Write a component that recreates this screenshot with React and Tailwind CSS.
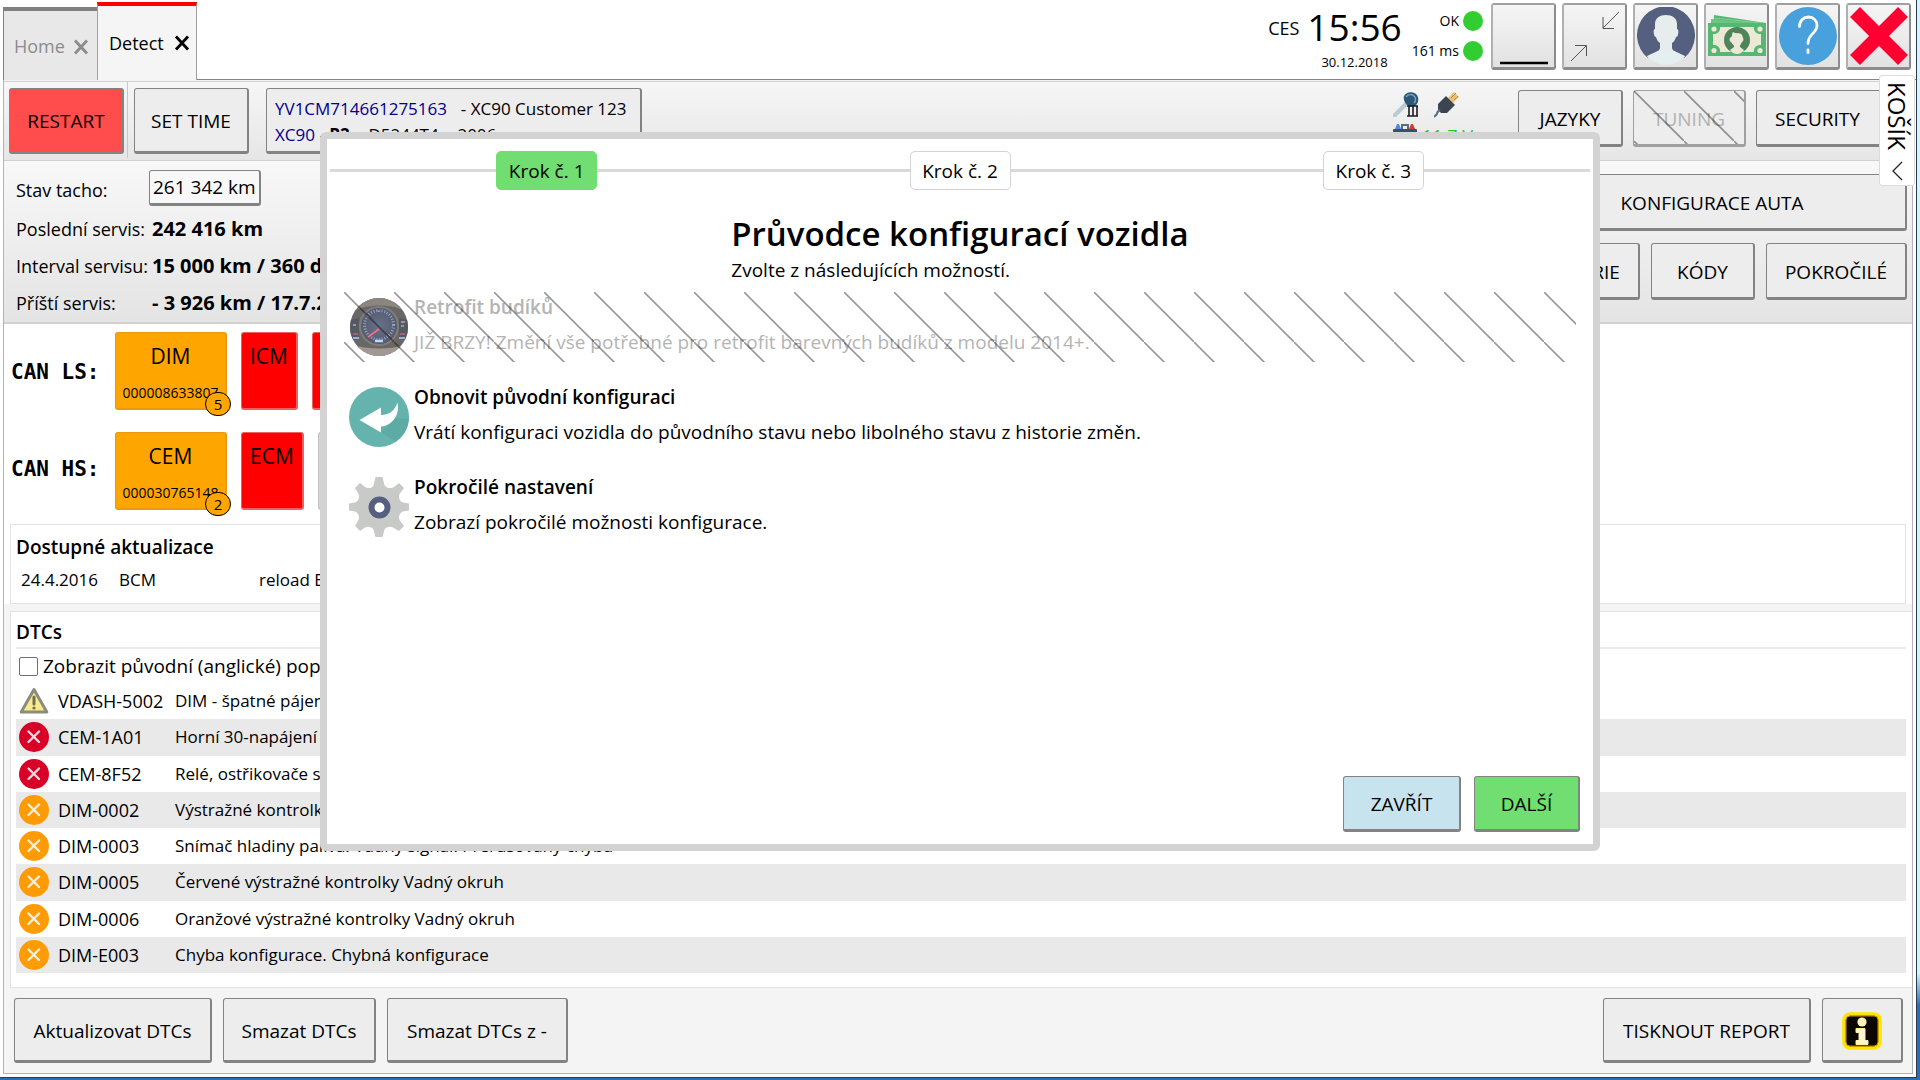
import { useId } from 'react';

const BTN =
  'flex items-center justify-center rounded-[3px] border border-r-2 border-b-[3px] border-[#838383] pt-[2px] text-[19px] leading-6';

function Hatch() {
  const id = useId();
  return (
    <svg className="pointer-events-none absolute inset-0 h-full w-full" aria-hidden="true">
      <defs>
        <pattern id={id} width="50" height="50" patternUnits="userSpaceOnUse">
          <path d="M-1-1L51 51" stroke="#000" strokeOpacity=".4" strokeWidth="1.6" />
        </pattern>
      </defs>
      <rect width="100%" height="100%" fill={`url(#${id})`} />
    </svg>
  );
}

function Cross({ className }) {
  return (
    <svg className={className} viewBox="0 0 16 16" aria-hidden="true">
      <path d="M2 1.5L14 14.5M14 1.5L2 14.5" stroke="currentColor" strokeWidth="2.8" fill="none" />
    </svg>
  );
}

function PersonIcon() {
  return (
    <svg className="h-[58px] w-[58px]" viewBox="0 0 58 58" aria-hidden="true">
      <path d="M11 51A29 29 0 1 1 47 51L36 45H22Z" fill="#556080" />
      <path d="M18 17c0-6 5-9 11-9s11 3 11 9v5c1 0 2 2 1 5 0 2-1 3-2 3-1 3-2 5-4 6v5c0 1 1 2 2 3l11 5c-5 6-12 9-19 9s-14-3-19-9l11-5c1-1 2-2 2-3v-5c-2-1-3-3-4-6-1 0-2-1-2-3-1-3 0-5 1-5Z" fill="#E7ECED" />
      <path d="M10 49.500L21 44h16l11 5.500A29 29 0 0 1 10 49.500Z" fill="#E4EFF2" />
    </svg>
  );
}

function CashIcon() {
  return (
    <svg className="h-[58px] w-[58px]" viewBox="0 0 58 58" aria-hidden="true">
      <path d="M6 8L58 16V24H5Z" fill="#57B671" />
      <path d="M3 12L58 17V28H3Z" fill="#6cc585" />
      <path d="M6 11L58 16.500" stroke="#9bdcae" strokeWidth=".7" />
      <rect x="0" y="16" width="58" height="33" fill="#57B671" />
      <path d="M12 20H46a6 6 0 0 0 7 7V38a6 6 0 0 0-7 7H12a6 6 0 0 0-7-7V27a6 6 0 0 0 7-7Z" fill="#EBE9D5" />
      <circle cx="6" cy="22" r="2.600" fill="#EBE9D5" />
      <circle cx="52" cy="22" r="2.600" fill="#EBE9D5" />
      <circle cx="6" cy="43.500" r="2.600" fill="#EBE9D5" />
      <circle cx="52" cy="43.500" r="2.600" fill="#EBE9D5" />
      <circle cx="29" cy="33" r="13" fill="#4F8359" />
      <path d="M24 29c0-1 0-3 1-4 2 2 7 0 9 3l1 3c1 1 0 4-1 4-1 2-2 3-2 4v1l4 3c-2 3-5 4-7 4s-5-1-7-4l4-3v-1c0-1-2-2-3-4-1 0-2-3-1-4Z" fill="#EBE9D5" />
    </svg>
  );
}

function HelpIcon() {
  return (
    <svg className="h-[58px] w-[58px]" viewBox="0 0 58 58" aria-hidden="true">
      <circle cx="29" cy="29" r="29" fill="#48A0DC" />
      <path d="M20.500 19.500c0-6 4-9.500 9-9.500 5 0 8.500 3.500 8.500 8.500 0 8-9 8-9 18" fill="none" stroke="#fff" strokeWidth="2.800" strokeLinecap="round" />
      <path d="M29 43v2.500" stroke="#fff" strokeWidth="2.800" strokeLinecap="round" />
    </svg>
  );
}

function ShrinkIcon() {
  return (
    <svg className="h-[58px] w-[58px]" viewBox="0 0 58 58" fill="none" stroke="#555" strokeWidth="1" aria-hidden="true">
      <path d="M53 5L37 21M37 10V21.500H48M5 54L20 39M9 38.500H20.500V49" />
    </svg>
  );
}

function KeyIcon() {
  return (
    <svg className="h-[26px] w-[26px]" viewBox="0 0 26 26" aria-hidden="true">
      <path d="M12 10L0 22v3h3L15 13Z" fill="#b9ccd4" />
      <path d="M11 4c2-4 8-5 12-2 3 3 3 8 0 11-2 2-6 2-9 0-2-2-4-5-3-9Z" fill="#2b5876" />
      <path d="M13 5c2-3 6-3 8-1 2 2 2 5 0 7" fill="none" stroke="#7fa6bd" strokeWidth="1.500" />
      <path d="M14 14h11M14 24h11M16 14v10M20 14v10M24 14v10" stroke="#1b1b24" strokeWidth="1.600" />
    </svg>
  );
}

function PlugIcon() {
  return (
    <svg className="h-[26px] w-[26px]" viewBox="0 0 26 26" aria-hidden="true">
      <path d="M14 6L20 0l5 5-6 6Z" fill="#ecc077" />
      <path d="M17 6l5-5M20 8l4-4" stroke="#b98a45" strokeWidth="1" />
      <path d="M12 4l9 9-8 8H7l-3-3v-6Z" fill="#3b4650" />
      <path d="M6 18c-2 1-3 2-3 4l-3 3" fill="none" stroke="#5b7083" strokeWidth="2" />
    </svg>
  );
}

function BatteryIcon() {
  return (
    <svg className="h-[24px] w-[24px]" viewBox="0 0 24 24" aria-hidden="true">
      <path d="M2 5l2-5h2l2 5Z" fill="#4d8fdc" />
      <path d="M16 5l2-5h2l2 5Z" fill="#c9432f" />
      <path d="M9 5V1h6v4" fill="none" stroke="#5c6b7a" strokeWidth="2" />
      <rect x="0" y="5" width="24" height="17" rx="1" fill="#3c4f66" />
    </svg>
  );
}

function GaugeIcon() {
  return (
    <svg className="m-[1px] h-[58px] w-[58px] opacity-70" viewBox="0 0 58 58" aria-hidden="true">
      <defs>
        <clipPath id="gaugeClip"><circle cx="29" cy="29" r="29" /></clipPath>
        <radialGradient id="gaugeFace"><stop offset="0" stopColor="#26365c" /><stop offset="1" stopColor="#11172b" /></radialGradient>
      </defs>
      <g clipPath="url(#gaugeClip)">
        <rect width="58" height="58" fill="#2b2826" />
        <path d="M0 0H58V15C45 5 14 5 0 15Z" fill="#5b554b" />
        <path d="M0 46C18 52 40 52 58 46V58H0Z" fill="#7a6d66" />
        <path d="M0 22l9-2v20l-9 4ZM58 22l-9-2v20l9 4Z" fill="#10131f" />
        <circle cx="29" cy="28" r="20" fill="#4a4744" />
        <circle cx="29" cy="28" r="18" fill="url(#gaugeFace)" />
        <circle cx="29" cy="27" r="14.500" fill="none" stroke="#6e8fd6" strokeWidth="3" strokeDasharray="1 2.300" pathLength="110" />
        <path d="M29 31L18 39" stroke="#f0305a" strokeWidth="1.800" />
        <path d="M25 43h8" stroke="#a9c4ff" strokeWidth="2.500" />
        <path d="M3 40h6M49 40h6" stroke="#6e8fd6" strokeWidth="2" />
        <path d="M3 36h5M50 36h5" stroke="#a12a49" strokeWidth="1.500" />
        <path d="M51 24h4M51 28h3M3 27h3" stroke="#b8c8ee" strokeWidth="1.200" />
      </g>
    </svg>
  );
}

function RestoreIcon() {
  return (
    <svg className="h-[60px] w-[60px]" viewBox="0 0 60 60" aria-hidden="true">
      <circle cx="30" cy="30" r="30" fill="#64B3AD" />
      <path d="M32 45L47 31l13 1A30 30 0 0 1 47 54.500Z" fill="#5CA8A2" opacity=".8" />
      <path d="M10.500 33L32 20.500v7.500c9 0 14-5 16.500-12.500C51 27 44 38.500 32 39.500V45.500Z" fill="#fff" />
    </svg>
  );
}

function GearIcon() {
  return (
    <svg className="h-[60px] w-[60px]" viewBox="0 0 60 60" aria-hidden="true">
      <path d="M26.500 0h7l2 8.500c3 3.500 7.500 3 10 1L50 6l5 5-4.500 6c-1.500 4 .5 8 3.500 8.500l6 1v7l-6 1c-3 1-5 4.500-3.500 8.500L55 49l-5 5-6-3.500c-3-1.500-7-.5-8.500 2L33.500 60h-7l-2-7.500c-1.500-2.500-5.500-3.500-8.500-2L11 54l-5-5 3.500-6c1.500-4-.5-7.500-3.500-8.500l-6-1v-7l6-1c3-.5 5-4.500 3.500-8.500L6 11l5-5 4.500 3.500c3 2 7 2.500 9-1Z" fill="#C7CAC7" />
      <circle cx="30.500" cy="30.500" r="8" fill="#fff" stroke="#556080" strokeWidth="6" />
    </svg>
  );
}

function DtcIcon({ kind }) {
  if (kind === 'warn') {
    return (
      <svg className="h-[30px] w-[30px]" viewBox="0 0 30 30" aria-hidden="true">
        <path d="M15 3.500L27.800 26H2.200Z" fill="#F8EB8A" stroke="#8b8b80" strokeWidth="3" strokeLinejoin="round" />
        <path d="M15 11v7" stroke="#6f6f55" strokeWidth="3" strokeLinecap="round" />
        <circle cx="15" cy="22" r="1.600" fill="#6f6f55" />
      </svg>
    );
  }
  return (
    <svg className="h-[30px] w-[30px]" viewBox="0 0 30 30" aria-hidden="true">
      <circle cx="15" cy="15" r="15" fill={kind === 'error' ? '#D80027' : '#FF9B05'} />
      <path d="M9.500 9.500l10.500 10.500M20 9.500L9.500 20" stroke="#fff" strokeOpacity=".85" strokeWidth="2.400" strokeLinecap="round" />
    </svg>
  );
}

function InfoIcon() {
  return (
    <svg className="h-[38px] w-[42px]" viewBox="0 0 42 38" aria-hidden="true">
      <rect x="3" y="2" width="36" height="34" rx="6" fill="#0a0800" stroke="#FFE400" strokeWidth="3.600" />
      <rect x="5" y="4" width="32" height="30" rx="4" fill="none" stroke="#c98a00" strokeWidth="1" />
      <circle cx="21" cy="10" r="4.600" fill="#FFF4B8" />
      <path d="M15 16.500h9v12h3v4H15v-4h3v-8h-3Z" fill="#FFF3D8" stroke="#FFF09a" strokeWidth="1" />
    </svg>
  );
}

const WINDOW_BUTTONS = [
  { label: 'Minimalizovat', icon: <svg className="h-[58px] w-[58px]" viewBox="0 0 58 58" aria-hidden="true"><path d="M5 56H53" stroke="#000" strokeWidth="2.500" /></svg> },
  { label: 'Obnovit okno', icon: <ShrinkIcon /> },
  { label: 'Uživatel', icon: <PersonIcon /> },
  { label: 'Kredit', icon: <CashIcon /> },
  { label: 'Nápověda', icon: <HelpIcon /> },
  { label: 'Ukončit', icon: <svg className="h-[58px] w-[58px]" viewBox="0 0 58 58" aria-hidden="true"><path d="M5 5L53 53M53 5L5 53" stroke="#FF0030" strokeWidth="14" /></svg> },
];

const ROWS = [
  ['warn', 'VDASH-5002', 'DIM - špatné pájení'],
  ['error', 'CEM-1A01', 'Horní 30-napájení'],
  ['error', 'CEM-8F52', 'Relé, ostřikovače světlometů'],
  ['orange', 'DIM-0002', 'Výstražné kontrolky'],
  ['orange', 'DIM-0003', 'Snímač hladiny paliva. Vadný signál. Přerušovaný chyba'],
  ['orange', 'DIM-0005', 'Červené výstražné kontrolky Vadný okruh'],
  ['orange', 'DIM-0006', 'Oranžové výstražné kontrolky Vadný okruh'],
  ['orange', 'DIM-E003', 'Chyba konfigurace. Chybná konfigurace'],
];

function Header() {
  return (
    <header className="flex h-20 bg-white">
      <div className="flex items-end pl-[3px]">
        <div className="flex h-[73px] w-[94px] items-center gap-2 border-t-4 border-l border-[#808080] bg-[#e8e8e8] pt-[2px] pl-[10px] text-[18px] text-[#8c8c8c]">
          <button>Home</button>
          <button aria-label="Zavřít Home"><Cross className="h-4 w-4" /></button>
        </div>
        <div className="flex h-[78px] w-[100px] items-center gap-[10px] border-t-4 border-r border-l border-[#a0a0a0] border-t-[#ff0000] bg-[#f5f5f5] pl-[11px] text-[18px]">
          <button>Detect</button>
          <button aria-label="Zavřít Detect"><Cross className="h-4 w-4" /></button>
        </div>
      </div>
      <div className="flex flex-1 items-start justify-end border-b border-[#85858c] pt-[3px] pr-[5px]">
        <div className="flex pt-px">
          <span className="mt-3 mr-2 text-[18px] leading-6">CES</span>
          <div className="flex flex-col items-center">
            <span className="text-[37px] leading-[46px]">15:56</span>
            <span className="text-[13px] leading-6">30.12.2018</span>
          </div>
        </div>
        <div className="mr-2 ml-[10px] flex flex-col items-end gap-[10px] pt-2 text-[14px] leading-5">
          <div className="flex items-center gap-1">OK<i className="h-5 w-5 rounded-full bg-[#32CD32]" /></div>
          <div className="flex items-center gap-1">161 ms<i className="h-5 w-5 rounded-full bg-[#32CD32]" /></div>
        </div>
        <div className="flex gap-[6px]">
          {WINDOW_BUTTONS.map((b) => (
            <button key={b.label} aria-label={b.label} className="flex h-[67px] w-[65px] items-center justify-center rounded-[3px] border-2 border-b-[3px] border-[#8c8c8c] border-t-[#a0a0a0] border-l-[#b0b0b0] bg-linear-to-b from-[#f5f5f5] to-[#e2e2e2]">
              {b.icon}
            </button>
          ))}
        </div>
      </div>
    </header>
  );
}

function Toolbar() {
  return (
    <div className="flex h-20 items-start border-t border-b border-[#d0d0d0] bg-linear-to-b from-[#f6f6f6] to-[#e6e6e6] pl-[5px]">
      <button className={`${BTN} mt-[6px] h-[66px] w-[115px] bg-[#ff4d4d]`}>RESTART</button>
      <div className="mr-[6px] ml-[3px] h-[76px] w-px bg-[#c8c8c8]" />
      <button className={`${BTN} mt-[6px] h-[66px] w-[115px] bg-[#ededed]`}>SET TIME</button>
      <button className="mt-[6px] ml-[17px] h-[66px] w-[376px] rounded-[3px] border border-r-2 border-b-[3px] border-[#838383] bg-[#ededed] px-2 pt-1 text-left text-[17px] leading-[26px] whitespace-pre">
        <span className="block"><span className="mr-[5px] text-[#00008b]">YV1CM714661275163</span>  - XC90 Customer 123</span>
        <span className="block"><span className="text-[#00008b]">XC90</span> - <b>P2</b> -  D5244T4  - 2006</span>
      </button>
      <div className="ml-auto flex items-start">
        <div className="mr-[45px] grid grid-cols-[26px_auto] gap-x-[15px] gap-y-[6px] pt-[10px]">
          <KeyIcon />
          <PlugIcon />
          <BatteryIcon />
          <span className="-ml-3 text-[18px] leading-6 text-[#1ec81e]">11.7 V</span>
        </div>
        <div className="flex gap-[10px] pt-2">
          <button className={`${BTN} h-[57px] w-[105px] bg-[#ededed]`}>JAZYKY</button>
          <button disabled className={`${BTN} relative h-[57px] w-[113px] border-[#a0a0a0] bg-[#ededed] text-[#b2b2b2]`}>TUNING<Hatch /></button>
          <button className={`${BTN} h-[57px] w-[156px] bg-[#ededed] pr-8`}>SECURITY</button>
        </div>
      </div>
    </div>
  );
}

function CarInfo() {
  return (
    <section className="flex h-[163px] items-start justify-between border-b-2 border-[#d0d0d0] bg-linear-to-b from-[#f8f8f8] to-[#e4e4e4]">
      <div className="grid grid-cols-[136px_auto] grid-rows-[49px_37px_37px_37px] items-center pl-3 text-[18px] leading-6">
        <label htmlFor="odo" className="pt-2">Stav tacho:</label>
        <input id="odo" readOnly value="261 342 km" className="mt-1 -ml-[3px] h-9 w-[112px] rounded-[3px] border border-r-2 border-b-[3px] border-[#838383] bg-[#f8f8f8] pl-[3px] text-[19px]" />
        <span>Poslední servis:</span><b className="text-[20px]">242 416 km</b>
        <span className="whitespace-nowrap">Interval servisu:</span><b className="text-[20px]">15 000 km / 360 dní</b>
        <span>Příští servis:</span><b className="text-[20px]">- 3 926 km / 17.7.2015</b>
      </div>
      <div className="grid grid-cols-[122px_104px_141px] gap-x-[11px] gap-y-[12px] pt-[13px] pr-[5px]">
        <button className={`${BTN} col-span-3 h-[57px] bg-[#ededed]`}>KONFIGURACE AUTA</button>
        <button className={`${BTN} h-[57px] bg-[#ededed]`}>HISTORIE</button>
        <button className={`${BTN} h-[57px] bg-[#ededed]`}>KÓDY</button>
        <button className={`${BTN} h-[57px] bg-[#ededed]`}>POKROČILÉ</button>
      </div>
    </section>
  );
}

function Ecu({ name, serial, count, className }) {
  return (
    <button className={`relative flex h-[78px] flex-col items-center justify-between rounded-[3px] border border-r-2 border-b-2 pt-[9px] pb-[3px] ${className}`}>
      <span className="text-[21px] leading-7">{name}</span>
      {serial && <span className="text-[14px] leading-6">{serial}</span>}
      {count && (
        <span className="absolute -right-[6px] -bottom-[8px] flex h-6 w-[26px] items-center justify-center rounded-full border border-black bg-[#FFA500] text-[15px] leading-4">{count}</span>
      )}
    </button>
  );
}

function CanBus() {
  const orange = 'w-[112px] bg-[#FFA500] border-[#e89a10]';
  const red = 'bg-[#FF0000] border-[#f06060]';
  const label = "w-[104px] font-['DejaVu_Sans_Mono',monospace] text-[21px] leading-6 font-bold";
  return (
    <section className="flex flex-col gap-[22px] bg-white pt-2 pb-[14px] pl-[7px]">
      <div className="flex items-center">
        <span className={`${label} pt-[2px]`}>CAN LS:</span>
        <div className="flex gap-[14px]">
          <Ecu name="DIM" serial="000008633807" count="5" className={orange} />
          <Ecu name="ICM" className={`${red} w-[57px]`} />
          <Ecu name="REM" className={`${red} w-[64px]`} />
        </div>
      </div>
      <div className="flex items-center">
        <span className={`${label} pb-[4px]`}>CAN HS:</span>
        <div className="flex gap-[14px]">
          <Ecu name="CEM" serial="000030765148" count="2" className={orange} />
          <Ecu name="ECM" className={`${red} w-[63px]`} />
          <Ecu name="TCM" className="w-[64px] border-[#c0c0c0] bg-[#d8d8d8]" />
        </div>
      </div>
    </section>
  );
}

function Updates() {
  return (
    <section className="bg-white pl-[6px]">
      <div className="mr-[6px] h-20 border border-[#e3e3e3] pt-[7px] pl-[5px]">
        <h2 className="text-[19px] leading-[30px] font-semibold">Dostupné aktualizace</h2>
        <div className="grid grid-cols-[98px_140px_auto] pl-[5px] text-[17px] leading-9">
          <span>24.4.2016</span><span>BCM</span><span>reload BCM</span>
        </div>
      </div>
    </section>
  );
}

function Dtcs() {
  return (
    <section className="mt-[7px] ml-[6px] border border-r-0 border-[#e3e3e3] bg-white pt-[6px] pr-[6px] pb-[14px] pl-[5px]">
      <h2 className="border-b-2 border-[#ececec] text-[19px] leading-[29px] font-semibold">DTCs</h2>
      <label className="flex h-[34px] items-center gap-[5px] pl-[3px] text-[19px]">
        <input type="checkbox" className="h-[19px] w-[19px] appearance-none rounded-[2px] border border-[#707070] bg-white" />
        Zobrazit původní (anglické) popisy
      </label>
      <table className="h-[290px] w-full border-collapse text-left text-[17px] leading-6">
        <tbody>
          {ROWS.map(([kind, code, text]) => (
            <tr key={code} className="even:bg-[#e9e9e9]">
              <td className="w-[42px] pl-[3px]"><DtcIcon kind={kind} /></td>
              <td className="w-[117px] text-[18px] whitespace-nowrap">{code}</td>
              <td>{text}</td>
            </tr>
          ))}
        </tbody>
      </table>
    </section>
  );
}

function Footer() {
  return (
    <footer className="flex items-center gap-[11px] py-[10px] pr-[9px] pl-[10px]">
      <button className={`${BTN} h-[65px] w-[198px] bg-[#ededed]`}>Aktualizovat DTCs</button>
      <button className={`${BTN} h-[65px] w-[153px] bg-[#ededed]`}>Smazat DTCs</button>
      <button className={`${BTN} h-[65px] w-[181px] bg-[#ededed]`}>Smazat DTCs z -</button>
      <button className={`${BTN} ml-auto h-[65px] w-[208px] bg-[#ededed]`}>TISKNOUT REPORT</button>
      <button aria-label="Informace" className={`${BTN} h-[65px] w-[81px] bg-[#ededed]`}><InfoIcon /></button>
    </footer>
  );
}

function Step({ label, active }) {
  return (
    <li className="flex flex-1 items-center">
      <i className="h-[3px] flex-1 bg-[#d9d9d9]" />
      <span className={`flex h-[39px] w-[101px] items-center justify-center rounded-[5px] border pt-[2px] text-[19px] ${active ? 'border-[#70DE70] bg-[#70DE70]' : 'border-[#d3d3d3] bg-white'}`}>{label}</span>
      <i className="h-[3px] flex-1 bg-[#d9d9d9]" />
    </li>
  );
}

function Option({ icon, title, text, disabled }) {
  return (
    <button disabled={disabled} className={`relative flex h-[70px] items-center gap-[5px] pl-[5px] text-left ${disabled ? 'text-[#b4b4b4]' : ''}`}>
      {icon}
      <span className="flex flex-col gap-[5px] pb-[5px] text-[19px] leading-[30px]">
        <b className="font-semibold">{title}</b>
        <span>{text}</span>
      </span>
      {disabled && <Hatch />}
    </button>
  );
}

function Wizard() {
  return (
    <div role="dialog" aria-labelledby="wizard-title" className="absolute top-[132px] left-1/2 flex min-h-[719px] w-2/3 -translate-x-1/2 flex-col rounded-[6px] border-[7px] border-[#d3d3d3] bg-white pt-3">
      <ol className="flex items-center px-[3px]">
        <i className="h-[3px] w-[10px] bg-[#d9d9d9]" />
        <Step label="Krok č. 1" active />
        <Step label="Krok č. 2" />
        <Step label="Krok č. 3" />
        <i className="h-[3px] w-[10px] bg-[#d9d9d9]" />
      </ol>
      <div className="mx-auto mt-6">
        <h1 id="wizard-title" className="text-[33px] leading-10 font-semibold">Průvodce konfigurací vozidla</h1>
        <p className="mt-1 text-[19px] leading-6">Zvolte z následujících možností.</p>
      </div>
      <div className="mx-[17px] mt-[10px] flex flex-col gap-5">
        <Option disabled icon={<GaugeIcon />} title="Retrofit budíků" text="JIŽ BRZY! Změní vše potřebné pro retrofit barevných budíků z modelu 2014+." />
        <Option icon={<RestoreIcon />} title="Obnovit původní konfiguraci" text="Vrátí konfiguraci vozidla do původního stavu nebo libolného stavu z historie změn." />
        <Option icon={<GearIcon />} title="Pokročilé nastavení" text="Zobrazí pokročilé možnosti konfigurace." />
      </div>
      <div className="mt-auto flex justify-end gap-[13px] pr-[13px] pb-3">
        <button className={`${BTN} h-14 w-[118px] bg-[#C7E4EE]`}>ZAVŘÍT</button>
        <button className={`${BTN} h-14 w-[106px] bg-[#70DE70]`}>DALŠÍ</button>
      </div>
    </div>
  );
}

export default function App() {
  return (
    <div className="relative min-h-screen bg-linear-to-b from-[#d5f3fa] from-90% to-[#2a6fb5] to-93% pr-[3px] pb-[3px] font-['Open_Sans','Noto_Sans',sans-serif] text-black">
      <div className="border-r border-b border-[#2c3a50] bg-white pb-[3px]">
        <Header />
        <div className="mr-[3px] ml-[3px] border-r border-b border-l border-[#b4b4b8] bg-[#f4f4f4] pt-px">
          <Toolbar />
          <CarInfo />
          <CanBus />
          <Updates />
          <Dtcs />
          <Footer />
        </div>
      </div>
      <button className="absolute top-[75px] right-[5px] flex h-[111px] w-[36px] flex-col items-center justify-between rounded-[3px] border border-[#dcdcdc] bg-white pt-[6px] pb-1">
        <span className="text-[24px] leading-7 [writing-mode:vertical-rl]">KOŠÍK</span>
        <svg className="h-5 w-3" viewBox="0 0 12 20" fill="none" stroke="#222" strokeWidth="1.300" aria-hidden="true"><path d="M11 1L2 10l9 9" /></svg>
      </button>
      <Wizard />
    </div>
  );
}
